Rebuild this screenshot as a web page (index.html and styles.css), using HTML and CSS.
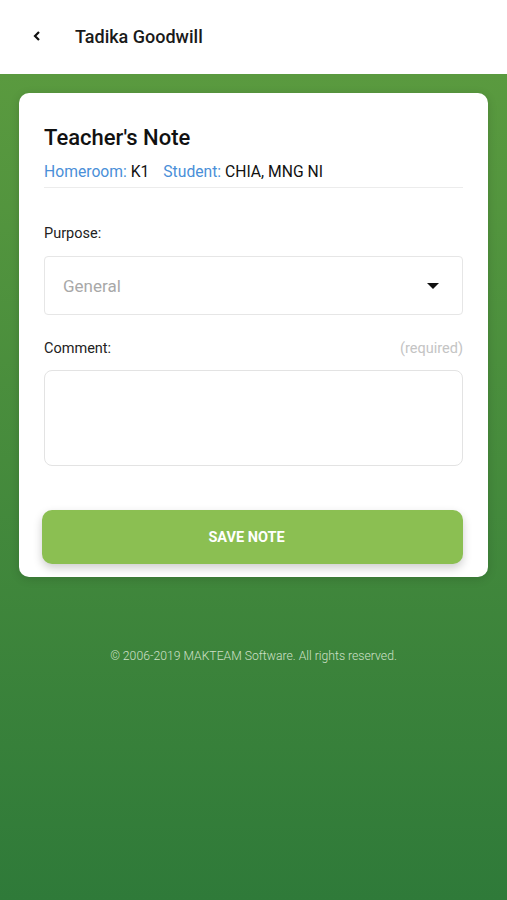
FILE: index.html
```html
<!DOCTYPE html>
<html>
<head>
    <link rel="stylesheet" href="styles.css">
</head>
<body>
<header class="topbar">
    <span class="back">
        <svg width="10" height="12" viewBox="0 0 10 12"><path d="M7 2 L3 6 L7 10" fill="none" stroke="#111" stroke-width="2.2"/></svg>
    </span>
    <h1>Tadika Goodwill</h1>
</header>

<main class="page">
    <div class="card">
        <h2>Teacher's Note</h2>
        <p class="meta"><span class="key">Homeroom:</span> K1 <span class="key second">Student:</span> CHIA, MNG NI</p>

        <div class="field">
            <div class="field-label">Purpose:</div>
            <div class="select">
                <span>General</span>
                <svg width="12" height="8" viewBox="0 0 12 8"><path d="M0 1 L12 1 L6 7 Z" fill="#111"/></svg>
            </div>
        </div>

        <div class="field">
            <div class="field-label">Comment: <span class="hint">(required)</span></div>
            <div class="textarea"></div>
        </div>

        <button class="save">SAVE NOTE</button>
    </div>

    <footer>
        <p>&copy; 2006-2019 MAKTEAM Software. All rights reserved.</p>
    </footer>
</main>
</body>
</html>
```
FILE: styles.css
```css
body {
    font-family: Roboto, "Liberation Sans", Arial, sans-serif;
    margin: 0;
    padding: 0;
    width: 507px;
    height: 900px;
    overflow: hidden;
    color: #111;
}

.topbar {
    height: 74px;
    background-color: #fff;
    display: flex;
    align-items: center;
    padding-bottom: 2px;
    box-sizing: border-box;
}

.topbar .back {
    width: 75px;
    display: flex;
    justify-content: center;
}

.topbar .back svg {
    margin-left: -1px;
}

.topbar h1 {
    margin: 0;
    font-size: 18px;
    font-weight: 500;
    color: #1a1a1a;
}

.page {
    height: 826px;
    background: linear-gradient(to bottom, #5a9a3f, #2f7a39);
    padding: 19px 19px 0 19px;
    box-sizing: border-box;
}

.card {
    background-color: #fff;
    border-radius: 10px;
    padding: 31px 25px 13px 25px;
    box-shadow: 0 2px 10px rgba(0, 0, 0, 0.15);
}

.card h2 {
    margin: 0;
    font-size: 22px;
    font-weight: 500;
    color: #111;
    line-height: 28px;
}

.meta {
    margin: 11px 0 0 0;
    font-size: 15.7px;
    line-height: 18px;
    padding-bottom: 6px;
    border-bottom: 1px solid #ececec;
}

.meta .key {
    color: #4a8fd8;
}

.meta .second {
    margin-left: 10px;
}

.field {
    margin-top: 37px;
}

.field + .field {
    margin-top: 25px;
}

.field-label {
    font-size: 14.5px;
    color: #222;
    display: flex;
    justify-content: space-between;
    line-height: 18px;
}

.hint {
    color: #c4c4c4;
}

.select {
    margin-top: 13px;
    height: 59px;
    border: 1px solid #e6e6e6;
    border-radius: 4px;
    box-sizing: border-box;
    display: flex;
    align-items: center;
    justify-content: space-between;
    padding: 1px 23px 0 18px;
    font-size: 17px;
    color: #a8a8a8;
}

.textarea {
    margin-top: 12px;
    height: 96px;
    border: 1px solid #e3e3e3;
    border-radius: 8px;
    box-sizing: border-box;
}

.save {
    display: block;
    width: calc(100% + 2px);
    margin: 44px 0 0 -2px;
    height: 54px;
    border: none;
    border-radius: 10px;
    background-color: #8bbf52;
    color: #fff;
    font-family: Roboto, "Liberation Sans", Arial, sans-serif;
    font-size: 14.5px;
    font-weight: 700;
    padding-right: 18px;
    box-shadow: 0 4px 10px rgba(0, 0, 0, 0.2);
}

footer {
    text-align: center;
    margin-top: 72px;
}

footer p {
    margin: 0;
    font-size: 12.2px;
    font-weight: 300;
    color: #cfe0c8;
}
```
